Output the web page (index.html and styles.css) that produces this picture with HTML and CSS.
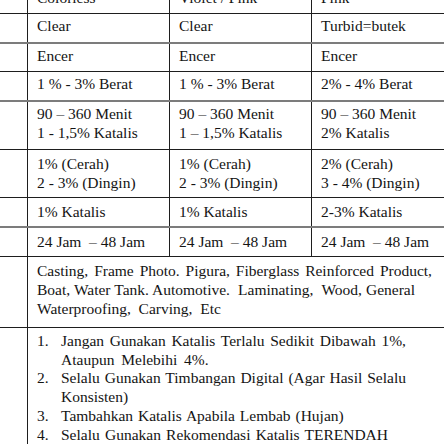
FILE: index.html
```html
<!DOCTYPE html>
<html lang="id">
<head>
<meta charset="utf-8">
<title>Tabel Resin</title>
<link rel="stylesheet" href="styles.css">
</head>
<body>
<div class="page">
  <div class="sheet">
    <div class="row head">
      <div class="lead"></div>
      <div class="cell">Colorless</div>
      <div class="cell">Violet / Pink</div>
      <div class="cell">Pink</div>
    </div>
    <div class="row thick">
      <div class="lead"></div>
      <div class="cell">Clear</div>
      <div class="cell">Clear</div>
      <div class="cell">Turbid=butek</div>
    </div>
    <div class="row short">
      <div class="lead"></div>
      <div class="cell">Encer</div>
      <div class="cell">Encer</div>
      <div class="cell">Encer</div>
    </div>
    <div class="row thick">
      <div class="lead"></div>
      <div class="cell">1 % - 3% Berat</div>
      <div class="cell">1 % - 3% Berat</div>
      <div class="cell">2% - 4% Berat</div>
    </div>
    <div class="row tall">
      <div class="lead"></div>
      <div class="cell">90 – 360 Menit<br>1 - 1,5% Katalis</div>
      <div class="cell">90 – 360 Menit<br>1 – 1,5% Katalis</div>
      <div class="cell">90 – 360 Menit<br>2% Katalis</div>
    </div>
    <div class="row tall low">
      <div class="lead"></div>
      <div class="cell">1% (Cerah)<br>2 - 3% (Dingin)</div>
      <div class="cell">1% (Cerah)<br>2 - 3% (Dingin)</div>
      <div class="cell">2% (Cerah)<br>3 - 4% (Dingin)</div>
    </div>
    <div class="row thick low">
      <div class="lead"></div>
      <div class="cell">1% Katalis</div>
      <div class="cell">1% Katalis</div>
      <div class="cell">2-3% Katalis</div>
    </div>
    <div class="row low">
      <div class="lead"></div>
      <div class="cell">24 Jam &nbsp;– 48 Jam</div>
      <div class="cell">24 Jam &nbsp;– 48 Jam</div>
      <div class="cell">24 Jam &nbsp;– 48 Jam</div>
    </div>
    <div class="row uses">
      <div class="lead"></div>
      <div class="cell span">
        <span class="ln just">Casting, Frame Photo. Pigura, Fiberglass Reinforced Product,</span>
        <span class="ln just l2">Boat, Water Tank. Automotive. &nbsp;Laminating, &nbsp;Wood, General</span>
        <span class="ln">Waterproofing, &nbsp;Carving, &nbsp;Etc</span>
      </div>
    </div>
    <div class="row notes-row">
      <div class="lead"></div>
      <div class="cell span">
        <ol class="notes">
          <li><span class="num">1.</span><span class="txt"><span class="ln just">Jangan Gunakan Katalis Terlalu Sedikit Dibawah 1%,</span><span class="ln ws">Ataupun Melebihi 4%.</span></span></li>
          <li><span class="num">2.</span><span class="txt"><span class="ln just">Selalu Gunakan Timbangan Digital (Agar Hasil Selalu</span><span class="ln">Konsisten)</span></span></li>
          <li><span class="num">3.</span><span class="txt"><span class="ln ws2">Tambahkan Katalis Apabila Lembab (Hujan)</span></span></li>
          <li><span class="num">4.</span><span class="txt"><span class="ln just l4">Selalu Gunakan Rekomendasi Katalis TERENDAH</span></span></li>
        </ol>
      </div>
    </div>
  </div>
</div>
</body>
</html>
```

FILE: styles.css
```css
html, body {
  margin: 0;
  padding: 0;
  background: #ffffff;
}

.page {
  width: 444px;
  height: 444px;
  overflow: hidden;
}

.sheet {
  width: 453px;
  margin-top: -16px;
  font-family: "Liberation Serif", "Times New Roman", serif;
  font-size: 15.5px;
  line-height: 19px;
  color: #141414;
}

.row {
  display: grid;
  grid-template-columns: 27px 142px 142px 142px;
  height: 28px;
  border-bottom: 1px solid #1e1e1e;
}

.row.head { height: 29px; }
.row.short { height: 27px; }
.row.tall { height: 47px; }
.row.thick { border-bottom: 2px solid #7c7c7c; }
.row.uses { height: 70px; }
.row.notes-row { height: 140px; border-bottom: none; }

.cell {
  border-left: 1px solid #1e1e1e;
  padding: 1.5px 0 0 9px;
  white-space: nowrap;
}

.row.head .cell { padding-top: 4px; }
.row.low .cell { padding-top: 3.5px; }

.cell.span {
  grid-column: 2 / 5;
  padding: 4px 21px 0 9px;
  white-space: normal;
}

.ln {
  display: block;
  white-space: nowrap;
}

.ln.just {
  white-space: normal;
  text-align: justify;
  text-align-last: justify;
}

.ln.l2 { margin-right: 17px; }
.ln.l4 { margin-right: 18px; }
.ln.ws { word-spacing: 3px; }
.ln.ws2 { word-spacing: 1px; }

.notes {
  list-style: none;
  margin: 0;
  padding: 0;
  line-height: 18.7px;
}

.notes li {
  display: grid;
  grid-template-columns: 24px 345px;
}

.num {
  display: block;
}

.txt {
  display: block;
}
```
